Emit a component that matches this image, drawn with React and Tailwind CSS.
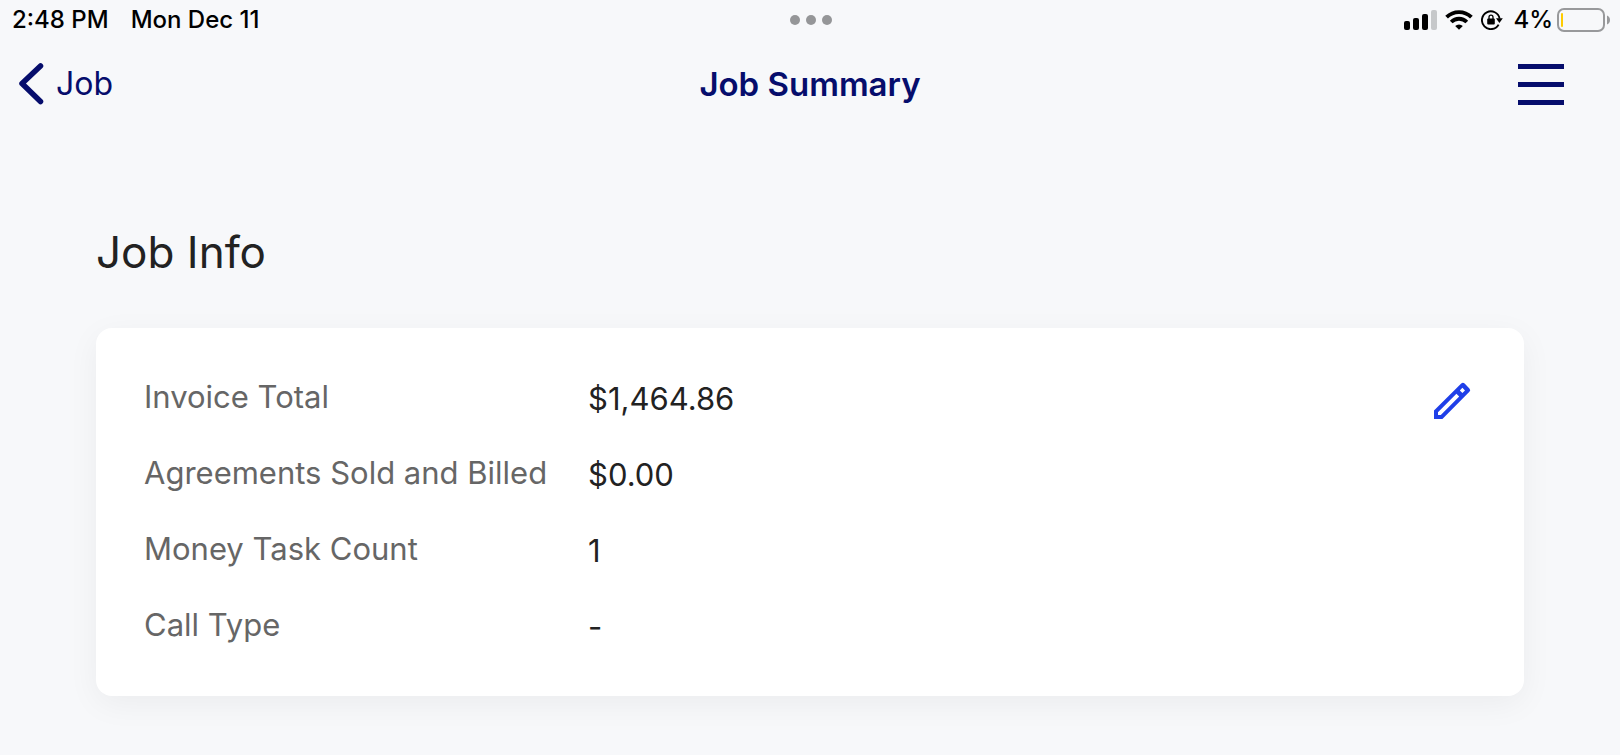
const rows = [
  { label: "Invoice Total", value: "$1,464.86" },
  { label: "Agreements Sold and Billed", value: "$0.00" },
  { label: "Money Task Count", value: "1" },
  { label: "Call Type", value: "-" },
];

function SignalIcon() {
  return (
    <svg className="h-5 w-[33px]" viewBox="0 0 33 20" aria-hidden="true">
      <rect x="0" y="11" width="6" height="9" rx="2" />
      <rect x="9" y="8" width="6" height="12" rx="2" />
      <rect x="18" y="4" width="6" height="16" rx="2" />
      <rect x="27" y="0" width="6" height="20" rx="2" fill="#c6c8ca" />
    </svg>
  );
}

function WifiIcon() {
  return (
    <svg className="h-5 w-7" viewBox="0 0 28 20" fill="none" stroke="#000" strokeWidth="3.8" aria-hidden="true">
      <path d="M1.6 7.2a17.6 17.6 0 0 1 24.8 0" />
      <path d="M6.2 12a11 11 0 0 1 15.6 0" />
      <path d="M14 19.8l-3.800-3.700a5.300 5.300 0 0 1 7.600 0z" fill="#000" stroke="none" />
    </svg>
  );
}

function RotationLockIcon() {
  return (
    <svg className="h-5 w-[22px]" viewBox="0 0 22 20" fill="none" stroke="#000" aria-hidden="true">
      <path d="M17.6 14.6A8.9 8.9 0 1 1 18.6 8.6" strokeWidth="1.9" />
      <path d="M15 8.3h6.800l-3.400 4.700z" fill="#000" stroke="none" />
      <rect x="6.2" y="8.6" width="7.6" height="6" rx="1" fill="#000" stroke="none" />
      <path d="M8 9V7.2a2 2 0 0 1 4 0V9" strokeWidth="1.3" />
    </svg>
  );
}

function BatteryIcon() {
  return (
    <svg className="h-6 w-[53px]" viewBox="0 0 53 24" aria-hidden="true">
      <rect x="1" y="1" width="46" height="22" rx="6" fill="none" stroke="#98999b" strokeWidth="2" />
      <rect x="4" y="5" width="2" height="14" rx="1" fill="#ffcc00" />
      <path d="M50 7.5c4 1.500 4 7.500 0 9z" fill="#98999b" />
    </svg>
  );
}

export default function App() {
  return (
    <div className="min-h-screen bg-[#f7f8fa] font-['Inter',sans-serif] text-[#222]">
      <div className="grid h-10 grid-cols-3 items-center pr-2.5 pl-3 text-[24px] leading-8 font-medium text-black">
        <div className="flex gap-[22px]">
          <span>2:48 PM</span>
          <span>Mon Dec 11</span>
        </div>
        <div className="flex justify-center gap-1.5">
          <span className="size-2.5 rounded-full bg-[#959698]" />
          <span className="size-2.5 rounded-full bg-[#959698]" />
          <span className="size-2.5 rounded-full bg-[#959698]" />
        </div>
        <div className="flex items-center justify-end">
          <div className="flex items-center gap-2">
            <SignalIcon />
            <WifiIcon />
            <RotationLockIcon />
          </div>
          <span className="mr-1 ml-2.5">4%</span>
          <BatteryIcon />
        </div>
      </div>

      <header className="grid h-[88px] grid-cols-3 items-center px-[18px] text-[#060d6c]">
        <a href="#job" className="flex items-center gap-3 justify-self-start text-[32px] leading-10">
          <svg className="h-[42px] w-[26px]" viewBox="0 0 26 42" fill="none" stroke="currentColor" strokeWidth="5.5" strokeLinecap="round" strokeLinejoin="round" aria-hidden="true">
            <path d="M22.5 3L4 20.5l18.5 18" />
          </svg>
          Job
        </a>
        <h1 className="justify-self-center text-[33px] leading-10 font-semibold">Job Summary</h1>
        <button type="button" aria-label="Menu" className="mr-[38px] flex flex-col gap-[13px] justify-self-end">
          <span className="h-[5px] w-[46px] bg-current" />
          <span className="h-[5px] w-[46px] bg-current" />
          <span className="h-[5px] w-[46px] bg-current" />
        </button>
      </header>

      <main className="px-24 pt-24 pb-14">
        <h2 className="text-[44px] leading-[56px]">Job Info</h2>
        <section className="mt-12 flex items-start justify-between rounded-2xl bg-white px-12 pt-[49px] pb-[47px] shadow-[0_8px_32px_rgba(0,0,0,0.05)]">
          <dl className="flex flex-col gap-8">
            {rows.map((row) => (
              <div key={row.label} className="flex items-start">
                <dt className="w-[444px] text-[31px] leading-10 text-[#666]">{row.label}</dt>
                <dd className="text-[31px] leading-[44px]">{row.value}</dd>
              </div>
            ))}
          </dl>
          <button type="button" aria-label="Edit job info" className="text-[#1f3fe8]">
            <svg className="size-12" viewBox="0 0 24 24" fill="currentColor" aria-hidden="true">
              <path fillRule="evenodd" d="M16.6 3.3a1.2 1.2 0 0 1 1.7 0l2.4 2.4a1.2 1.2 0 0 1 0 1.7L7.2 21H3v-4.2zM5 17.6V19h1.4l9.200-9.200-1.400-1.400zM17.2 5.400l-1.300 1.300 1.300 1.300 1.300-1.300z" />
            </svg>
          </button>
        </section>
      </main>
    </div>
  );
}
